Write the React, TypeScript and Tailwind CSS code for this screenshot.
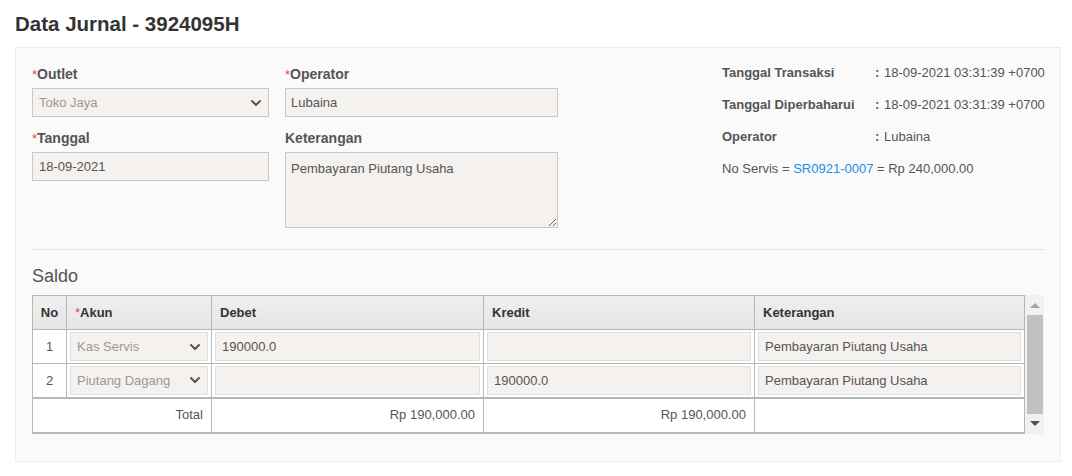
import { ChevronDown } from "lucide-react";

const Req = () => <span className="text-[13px] font-normal text-[#e04b4b]">*</span>;

const Label = ({ text, req }: { text: string; req?: boolean }) => (
  <div className="mb-1 h-5 text-[14px] font-bold leading-5 text-[#555]">
    {req && <Req />}
    {text}
  </div>
);

const Select = ({ value, className = "" }: { value: string; className?: string }) => (
  <div
    className={`flex items-center justify-between border bg-[#f4f1ee] pl-[6px] pr-[4px] text-[13px] text-[#999] ${className}`}
  >
    <span>{value}</span>
    <ChevronDown className="h-4 w-4 text-[#555]" strokeWidth={3} />
  </div>
);

const CellInput = ({ value = "" }: { value?: string }) => (
  <div className="flex h-[29px] items-center border border-[#e3e0dc] bg-[#f4f1ee] px-[6px] text-[13px] text-[#555]">
    {value}
  </div>
);

const InfoRow = ({ label, value }: { label: string; value: string }) => (
  <div className="flex h-8 items-center whitespace-nowrap text-[13px] text-[#555]">
    <span className="w-[153px] shrink-0 font-bold">{label}</span>
    <span className="w-[9px] shrink-0 font-bold">:</span>
    <span className="shrink-0">{value}</span>
  </div>
);

export default function App() {
  return (
    <main className="min-h-[476px] w-full bg-white font-['Liberation_Sans',Arial,sans-serif] text-[#555]">
      <h1 className="px-[15px] pt-[12px] pb-[11px] text-[20.5px] font-bold leading-6 text-[#333]">
        Data Jurnal - 3924095H
      </h1>

      <section className="ml-[15px] w-[1046px] border border-[#ececec] bg-[#fafafa] px-4 pt-[16px] pb-[27px]">
        {/* ── Header form + info ──────────────────────────── */}
        <div className="flex justify-between">
          <div className="grid grid-cols-[237px_273px] gap-x-4">
            <div>
              <Label text="Outlet" req />
              <Select value="Toko Jaya" className="h-[29px] border-[#c8c8c8]" />
              <div className="mt-[11px]">
                <Label text="Tanggal" req />
                <div className="flex h-[29px] items-center border border-[#c8c8c8] bg-[#f4f1ee] px-[6px] text-[13px] text-[#555]">
                  18-09-2021
                </div>
              </div>
            </div>
            <div>
              <Label text="Operator" req />
              <div className="flex h-[29px] items-center border border-[#c8c8c8] bg-[#f4f1ee] px-[5px] text-[13px] text-[#555]">
                Lubaina
              </div>
              <div className="mt-[11px]">
                <Label text="Keterangan" />
                <textarea
                  readOnly
                  defaultValue="Pembayaran Piutang Usaha"
                  className="block h-[76px] w-full border border-[#c8c8c8] bg-[#f4f1ee] px-[5px] py-[6px] text-[13px] text-[#555] outline-none"
                />
              </div>
            </div>
          </div>

          <div className="-mt-[7px] w-[322px] shrink-0">
            <InfoRow label="Tanggal Transaksi" value="18-09-2021 03:31:39 +0700" />
            <InfoRow label="Tanggal Diperbaharui" value="18-09-2021 03:31:39 +0700" />
            <InfoRow label="Operator" value="Lubaina" />
            <div className="flex h-8 items-center whitespace-nowrap text-[13px] text-[#555]">
              No Servis =&nbsp;<span className="text-[#1a8ee6]">SR0921-0007</span>&nbsp;= Rp 240,000.00
            </div>
          </div>
        </div>

        <div className="mt-[21px] border-t border-[#e3e3e3]" />

        {/* ── Saldo ───────────────────────────────────────── */}
        <h2 className="mt-[15px] mb-[8px] text-[18px] leading-[22px] text-[#555]">Saldo</h2>

        <div className="flex w-[1012px]">
          <table className="w-[992px] table-fixed border-collapse text-[13px]">
            <colgroup>
              <col className="w-[34px]" />
              <col className="w-[145px]" />
              <col className="w-[272px]" />
              <col className="w-[271px]" />
              <col className="w-[270px]" />
            </colgroup>
            <thead>
              <tr className="h-[34px] bg-gradient-to-b from-[#f0f0f0] to-[#e4e4e4] text-left font-bold text-[#333]">
                <th className="border border-[#b2b9bc] text-center">No</th>
                <th className="border border-[#b2b9bc] px-2">
                  <Req />
                  Akun
                </th>
                <th className="border border-[#b2b9bc] px-2">Debet</th>
                <th className="border border-[#b2b9bc] px-2">Kredit</th>
                <th className="border border-[#b2b9bc] px-2">Keterangan</th>
              </tr>
            </thead>
            <tbody className="bg-white">
              <tr className="h-[34px]">
                <td className="border border-[#b2b9bc] text-center">1</td>
                <td className="border border-[#b2b9bc] px-[3px]">
                  <Select value="Kas Servis" className="h-[29px] border-[#e3e0dc]" />
                </td>
                <td className="border border-[#b2b9bc] px-[3px]">
                  <CellInput value="190000.0" />
                </td>
                <td className="border border-[#b2b9bc] px-[3px]">
                  <CellInput />
                </td>
                <td className="border border-[#b2b9bc] px-[3px]">
                  <CellInput value="Pembayaran Piutang Usaha" />
                </td>
              </tr>
              <tr className="h-[34px]">
                <td className="border border-[#b2b9bc] text-center">2</td>
                <td className="border border-[#b2b9bc] px-[3px]">
                  <Select value="Piutang Dagang" className="h-[29px] border-[#e3e0dc]" />
                </td>
                <td className="border border-[#b2b9bc] px-[3px]">
                  <CellInput />
                </td>
                <td className="border border-[#b2b9bc] px-[3px]">
                  <CellInput value="190000.0" />
                </td>
                <td className="border border-[#b2b9bc] px-[3px]">
                  <CellInput value="Pembayaran Piutang Usaha" />
                </td>
              </tr>
            </tbody>
            <tfoot className="bg-white">
              <tr className="h-[35px] border-t-2 border-b-2 border-[#b2b9bc]">
                <td colSpan={2} className="border-x border-[#b2b9bc] px-2 text-right">
                  Total
                </td>
                <td className="border-x border-[#b2b9bc] px-2 text-right">Rp 190,000.00</td>
                <td className="border-x border-[#b2b9bc] px-2 text-right">Rp 190,000.00</td>
                <td className="border-x border-[#b2b9bc]" />
              </tr>
            </tfoot>
          </table>

          {/* scrollbar */}
          <div className="flex w-[20px] flex-col items-center bg-[#f1f1f1]">
            <div className="flex h-[20px] w-full items-center justify-center">
              <div className="h-0 w-0 border-x-[5px] border-b-[5px] border-x-transparent border-b-[#a3a3a3]" />
            </div>
            <div className="w-[16px] flex-1 bg-[#c1c1c1]" />
            <div className="flex h-[20px] w-full items-center justify-center">
              <div className="h-0 w-0 border-x-[5px] border-t-[5px] border-x-transparent border-t-[#505050]" />
            </div>
          </div>
        </div>
      </section>
    </main>
  );
}
